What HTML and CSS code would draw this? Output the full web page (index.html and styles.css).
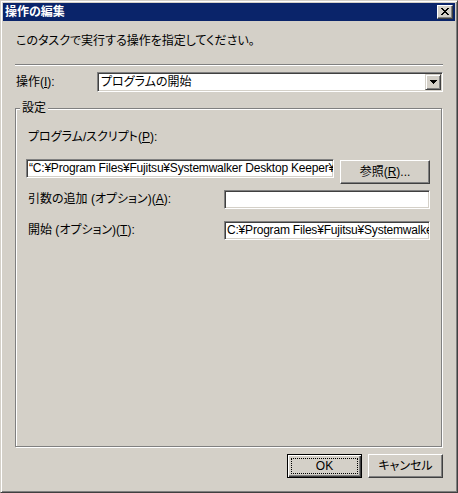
FILE: index.html
```html
<!DOCTYPE html>
<html lang="ja">
<head>
<meta charset="utf-8">
<title>操作の編集</title>
<link rel="stylesheet" href="styles.css">
</head>
<body>
<div class="window">
  <div class="titlebar">
    <span class="title">操作の編集</span>
    <span class="close">
      <svg width="8" height="7" viewBox="0 0 8 7" shape-rendering="crispEdges">
        <rect x="0" y="0" width="2" height="1"/><rect x="6" y="0" width="2" height="1"/>
        <rect x="1" y="1" width="2" height="1"/><rect x="5" y="1" width="2" height="1"/>
        <rect x="2" y="2" width="4" height="1"/>
        <rect x="3" y="3" width="2" height="1"/>
        <rect x="2" y="4" width="4" height="1"/>
        <rect x="1" y="5" width="2" height="1"/><rect x="5" y="5" width="2" height="1"/>
        <rect x="0" y="6" width="2" height="1"/><rect x="6" y="6" width="2" height="1"/>
      </svg>
    </span>
  </div>
  <div class="content">
    <p class="intro">このタスクで実行する操作を指定してください。</p>
    <div class="sep"></div>
    <div class="action-row">
      <span class="lbl action-lbl">操作(<u>I</u>):</span>
      <div class="combo">
        <span class="combo-text">プログラムの開始</span>
        <span class="combo-btn">
          <svg width="7" height="4" viewBox="0 0 7 4" shape-rendering="crispEdges">
            <rect x="0" y="0" width="7" height="1"/><rect x="1" y="1" width="5" height="1"/>
            <rect x="2" y="2" width="3" height="1"/><rect x="3" y="3" width="1" height="1"/>
          </svg>
        </span>
      </div>
    </div>
    <div class="group">
      <span class="legend">設定</span>
      <div class="lbl prog-lbl">プログラム/スクリプト(<u>P</u>):</div>
      <div class="path-row">
        <div class="field path-field">“C:¥Program Files¥Fujitsu¥Systemwalker Desktop Keeper¥DTKAGENT.exe”</div>
        <div class="btn browse">参照(<u>R</u>)...</div>
      </div>
      <div class="opt-row args-row">
        <span class="lbl opt-lbl">引数の追加 (オプション)(<u>A</u>):</span>
        <div class="field opt-field"></div>
      </div>
      <div class="opt-row start-row">
        <span class="lbl opt-lbl">開始 (オプション)(<u>T</u>):</span>
        <div class="field opt-field">C:¥Program Files¥Fujitsu¥Systemwalker Desktop Keeper¥</div>
      </div>
    </div>
    <div class="buttons">
      <div class="btn default"><span class="focus">OK</span></div>
      <div class="btn">キャンセル</div>
    </div>
  </div>
</div>
</body>
</html>
```
FILE: styles.css
```css
html, body {
  margin: 0;
  padding: 0;
  background: #d4d0c8;
}
body {
  font-family: "Liberation Sans", "Noto Sans CJK JP", sans-serif;
  font-size: 12px;
  line-height: 15px;
  color: #000;
  font-feature-settings: "palt";
}
u { text-decoration: underline; text-underline-offset: 1px; }

.window {
  box-sizing: border-box;
  width: 458px;
  height: 493px;
  border: 1px solid;
  border-color: #d4d0c8 #404040 #404040 #d4d0c8;
  box-shadow: inset 1px 1px 0 #fff, inset -1px -1px 0 #808080;
  padding: 2px;
  background: #d4d0c8;
  overflow: hidden;
}

.titlebar {
  height: 18px;
  background: #0a246a;
  display: flex;
  align-items: center;
}
.title {
  color: #fff;
  font-weight: bold;
  padding-left: 2px;
  line-height: 18px;
}
.close {
  margin-left: auto;
  margin-right: 2px;
  box-sizing: border-box;
  width: 16px;
  height: 14px;
  background: #d4d0c8;
  border: 1px solid;
  border-color: #fff #404040 #404040 #fff;
  box-shadow: inset -1px -1px 0 #808080;
  display: flex;
  align-items: center;
  justify-content: center;
  padding-bottom: 1px;
}
.close svg { display: block; fill: #000; }

.content {
  padding: 0 12px 0 13px;
}
.intro {
  margin: 13px 0 0;
  line-height: 15px;
}
.sep {
  margin: 15px 0 0 -1px;
  height: 0;
  border-top: 1px solid #808080;
  border-bottom: 1px solid #fff;
}

.action-row {
  margin-top: 6px;
  display: flex;
  align-items: center;
}
.action-lbl {
  width: 81px;
  flex: none;
}
.combo {
  box-sizing: border-box;
  flex: 1;
  height: 20px;
  background: #fff;
  border: 1px solid;
  border-color: #808080 #fff #fff #808080;
  box-shadow: inset 1px 1px 0 #404040, inset -1px -1px 0 #d4d0c8;
  padding: 1px;
  display: flex;
  align-items: center;
}
.combo-text {
  padding-left: 2px;
  flex: 1;
  line-height: 16px;
}
.combo-btn {
  box-sizing: border-box;
  width: 16px;
  height: 16px;
  background: #d4d0c8;
  border: 1px solid;
  border-color: #d4d0c8 #404040 #404040 #d4d0c8;
  box-shadow: inset 1px 1px 0 #fff, inset -1px -1px 0 #808080;
  display: flex;
  align-items: center;
  justify-content: center;
}
.combo-btn svg { display: block; fill: #000; }

.group {
  position: relative;
  box-sizing: border-box;
  margin: 16px 0 0 -1px;
  width: 427px;
  height: 339px;
  border: 1px solid #808080;
  box-shadow: 1px 1px 0 #fff, inset 1px 1px 0 #fff;
  padding: 21px 11px 0 10px;
}
.legend {
  position: absolute;
  left: 4px;
  top: -8px;
  padding: 0 2px;
  background: #d4d0c8;
  line-height: 15px;
}
.prog-lbl {
  padding-left: 2px;
}
.path-row {
  margin-top: 14px;
  display: flex;
  align-items: flex-start;
  gap: 6px;
}
.field {
  box-sizing: border-box;
  height: 19px;
  background: #fff;
  border: 1px solid;
  border-color: #808080 #fff #fff #808080;
  box-shadow: inset 1px 1px 0 #404040, inset -1px -1px 0 #d4d0c8;
  padding: 1px 2px 0;
  white-space: nowrap;
  overflow: hidden;
  line-height: 15px;
  letter-spacing: -0.2px;
}
.path-field {
  width: 308px;
  flex: none;
}
.btn {
  box-sizing: border-box;
  width: 75px;
  height: 24px;
  background: #d4d0c8;
  border: 1px solid;
  border-color: #fff #404040 #404040 #fff;
  box-shadow: inset -1px -1px 0 #808080;
  display: flex;
  align-items: center;
  justify-content: center;
}
.browse {
  width: 90px;
  margin-top: 1px;
}
.opt-row {
  display: flex;
  align-items: center;
}
.args-row { margin-top: 6px; }
.start-row { margin-top: 12px; }
.opt-lbl {
  padding-left: 2px;
  width: 196px;
  flex: none;
}
.opt-field {
  width: 206px;
  flex: none;
}

.buttons {
  margin-top: 7px;
  display: flex;
  justify-content: flex-end;
  gap: 6px;
}
.btn.default {
  border: 1px solid #000;
  box-shadow: inset 1px 1px 0 #fff, inset -1px -1px 0 #404040, inset -2px -2px 0 #808080;
  padding: 3px;
}
.focus {
  box-sizing: border-box;
  width: 100%;
  height: 100%;
  border: 1px dotted #000;
  display: flex;
  align-items: center;
  justify-content: center;
}
```
